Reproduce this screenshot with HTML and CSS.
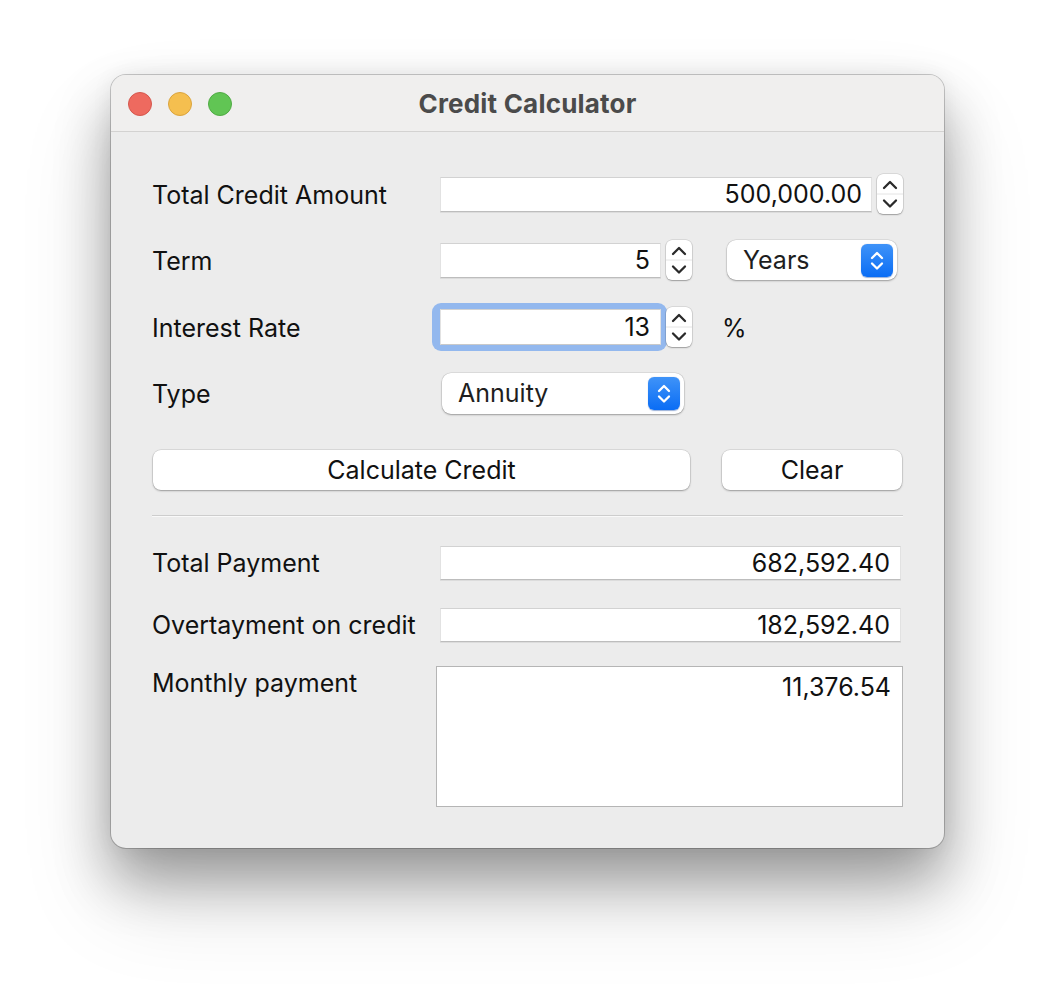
FILE: index.html
```html
<!DOCTYPE html>
<html>
<head>
<meta charset="utf-8">
<title>Credit Calculator</title>
<link rel="stylesheet" href="styles.css">
</head>
<body>
<div class="window">
  <div class="titlebar">
    <div class="lights">
      <span class="light red"></span>
      <span class="light yellow"></span>
      <span class="light green"></span>
    </div>
    <div class="title">Credit Calculator</div>
    <div class="spacer"></div>
  </div>
  <div class="content">
    <div class="row row-1">
      <div class="label">Total Credit Amount</div>
      <div class="field field-amount">500,000.00</div>
      <div class="stepper">
        <svg width="26" height="40" viewBox="0 0 26 40"><line x1="0" y1="20" x2="26" y2="20" class="div"/><path d="M7 14 L13 8 L19 14" class="chev"/><path d="M7 26.5 L13 32.5 L19 26.5" class="chev"/></svg>
      </div>
    </div>
    <div class="row row-2">
      <div class="label">Term</div>
      <div class="field field-short">5</div>
      <div class="stepper">
        <svg width="26" height="40" viewBox="0 0 26 40"><line x1="0" y1="20" x2="26" y2="20" class="div"/><path d="M7 14 L13 8 L19 14" class="chev"/><path d="M7 26.5 L13 32.5 L19 26.5" class="chev"/></svg>
      </div>
      <div class="popup popup-years">
        <span class="popup-text">Years</span>
        <span class="popup-btn">
          <svg width="32" height="33" viewBox="0 0 32 33"><path d="M11 14 L16 9 L21 14" class="wchev"/><path d="M11 19.5 L16 24.5 L21 19.5" class="wchev"/></svg>
        </span>
      </div>
    </div>
    <div class="row row-3">
      <div class="label">Interest Rate</div>
      <div class="focus-ring">
        <div class="field field-short field-focused">13</div>
      </div>
      <div class="stepper stepper-after-ring">
        <svg width="26" height="40" viewBox="0 0 26 40"><line x1="0" y1="20" x2="26" y2="20" class="div"/><path d="M7 14 L13 8 L19 14" class="chev"/><path d="M7 26.5 L13 32.5 L19 26.5" class="chev"/></svg>
      </div>
      <div class="unit">%</div>
    </div>
    <div class="row row-4">
      <div class="label">Type</div>
      <div class="popup popup-type">
        <span class="popup-text">Annuity</span>
        <span class="popup-btn">
          <svg width="32" height="33" viewBox="0 0 32 33"><path d="M11 14 L16 9 L21 14" class="wchev"/><path d="M11 19.5 L16 24.5 L21 19.5" class="wchev"/></svg>
        </span>
      </div>
    </div>
    <div class="row row-buttons">
      <button class="btn btn-calc">Calculate Credit</button>
      <button class="btn btn-clear">Clear</button>
    </div>
    <div class="separator"></div>
    <div class="row row-result row-r1">
      <div class="label">Total Payment</div>
      <div class="field field-result">682,592.40</div>
    </div>
    <div class="row row-result row-r2">
      <div class="label">Overtayment on credit</div>
      <div class="field field-result">182,592.40</div>
    </div>
    <div class="row row-monthly">
      <div class="label label-top">Monthly payment</div>
      <div class="textbox">11,376.54</div>
    </div>
  </div>
</div>
</body>
</html>
```
FILE: styles.css
```css
* { box-sizing: border-box; }

html, body { background: #ffffff; }

body {
  margin: 0;
  min-height: 996px;
  padding: 75px 0 148px 111px;
  font-family: Inter, "Noto Sans", sans-serif;
  color: #111111;
}

.window {
  width: 833px;
  height: 773px;
  border-radius: 15px;
  background: #ececec;
  box-shadow: 0 0 0 1px rgba(0,0,0,0.2), 0 32px 55px rgba(0,0,0,0.32), 0 50px 95px rgba(0,0,0,0.14), 0 0 22px rgba(0,0,0,0.06);
  overflow: hidden;
  display: flex;
  flex-direction: column;
}

.titlebar {
  height: 57px;
  flex: none;
  background: #f0efee;
  border-bottom: 1px solid #d3d2d1;
  display: grid;
  grid-template-columns: 1fr auto 1fr;
  align-items: center;
}

.lights {
  display: flex;
  gap: 16px;
  padding-left: 17px;
  padding-top: 1px;
}

.light {
  width: 24px;
  height: 24px;
  border-radius: 50%;
}
.red { background: #ee6a5f; border: 1px solid #d5574d; }
.yellow { background: #f5bf4f; border: 1px solid #dba43d; }
.green { background: #61c554; border: 1px solid #50ab44; }

.title {
  font-weight: 700;
  font-size: 26px;
  color: #4b4b4b;
  letter-spacing: 0.2px;
}

.content {
  padding: 42px 41px 0 41px;
  display: flex;
  flex-direction: column;
}

.row {
  display: flex;
  align-items: center;
  height: 40px;
  flex: none;
}

.label {
  width: 288px;
  flex: none;
  font-size: 25px;
  line-height: 30px;
}
.row-1 .label, .row-2 .label, .row-3 .label, .row-4 .label { padding-top: 2px; }

.field {
  height: 35px;
  background: #fff;
  border-top: 1px solid #d2d2d2;
  border-left: 1px solid #e2e2e2;
  border-right: 1px solid #e2e2e2;
  border-bottom: 1px solid #bdbdbd;
  box-shadow: 0 1px 0 #dcdcdc;
  text-align: right;
  font-size: 25px;
  line-height: 33px;
  padding-right: 9px;
  flex: none;
}

.field-amount { width: 432px; }
.field-short { width: 221px; padding-right: 10px; }

.stepper {
  width: 26px;
  height: 40px;
  margin-left: 5px;
  background: #fff;
  border-radius: 6px;
  box-shadow: 0 0 0 0.5px rgba(0,0,0,0.16), 0 1px 1.5px rgba(0,0,0,0.28);
  flex: none;
}
.stepper svg { display: block; }
.stepper .div { stroke: #e4e4e4; stroke-width: 1; }
.stepper .chev { fill: none; stroke: #2a2a2a; stroke-width: 2.3; stroke-linecap: round; stroke-linejoin: round; }

.popup {
  height: 40px;
  background: #fff;
  border-radius: 9px;
  box-shadow: 0 0 0 0.5px rgba(0,0,0,0.12), 0 1px 2px rgba(0,0,0,0.3);
  display: flex;
  align-items: center;
  justify-content: space-between;
  padding: 0 4px 0 16px;
  flex: none;
}
.popup-text { font-size: 25px; color: #1e1e1e; }
.popup-btn {
  width: 32px;
  height: 33px;
  border-radius: 6px;
  background: linear-gradient(#3f93f8, #0a6df5);
  box-shadow: 0 0.5px 1px rgba(0,60,160,0.4);
}
.popup-btn svg { display: block; }
.popup-btn .wchev { fill: none; stroke: #fff; stroke-width: 2.3; stroke-linecap: round; stroke-linejoin: round; }

.popup-years { width: 170px; margin-left: 35px; }
.popup-type { width: 242px; height: 41px; margin-left: 2px; }

.row-2 { margin-top: 26px; }
.row-3 { margin-top: 27px; }
.row-4 { margin-top: 26px; }

.focus-ring {
  margin-left: -8px;
  padding: 6px 6px 6px 8px;
  border-radius: 9px;
  background: #93b8ee;
  flex: none;
}
.field-focused {
  height: 36px;
  box-shadow: none;
  border-bottom-color: #c9c9c9;
  line-height: 34px;
}
.stepper-after-ring { margin-left: -1px; }

.unit {
  margin-left: 30px;
  font-size: 25px;
  padding-top: 2px;
}

.row-buttons { margin-top: 37px; }

.btn {
  height: 40px;
  background: #fff;
  border: none;
  border-radius: 8px;
  box-shadow: 0 0 0 0.5px rgba(0,0,0,0.14), 0 1px 2px rgba(0,0,0,0.3);
  font-family: Inter, "Noto Sans", sans-serif;
  font-size: 25px;
  color: #111;
  padding: 0;
  flex: none;
}
.btn-calc { width: 537px; margin-left: 1px; }
.btn-clear { width: 180px; margin-left: 32px; }

.separator {
  margin-top: 25px;
  height: 2px;
  border-top: 1px solid #cdcdcd;
  border-bottom: 1px solid #f9f9f9;
  flex: none;
}

.row-result { height: 34px; }
.row-r1 { margin-top: 29px; }
.row-r2 { margin-top: 28px; }
.field-result {
  width: 461px;
  height: 34px;
  line-height: 32px;
  padding-right: 10px;
}

.row-monthly {
  height: auto;
  align-items: flex-start;
  margin-top: 24px;
}
.label-top { padding-top: 2px; }

.textbox {
  width: 467px;
  height: 141px;
  margin-left: -4px;
  background: #fff;
  border: 1px solid #b5b5b5;
  text-align: right;
  font-size: 25px;
  line-height: 30px;
  padding: 5px 11px 0 0;
  flex: none;
}
```
